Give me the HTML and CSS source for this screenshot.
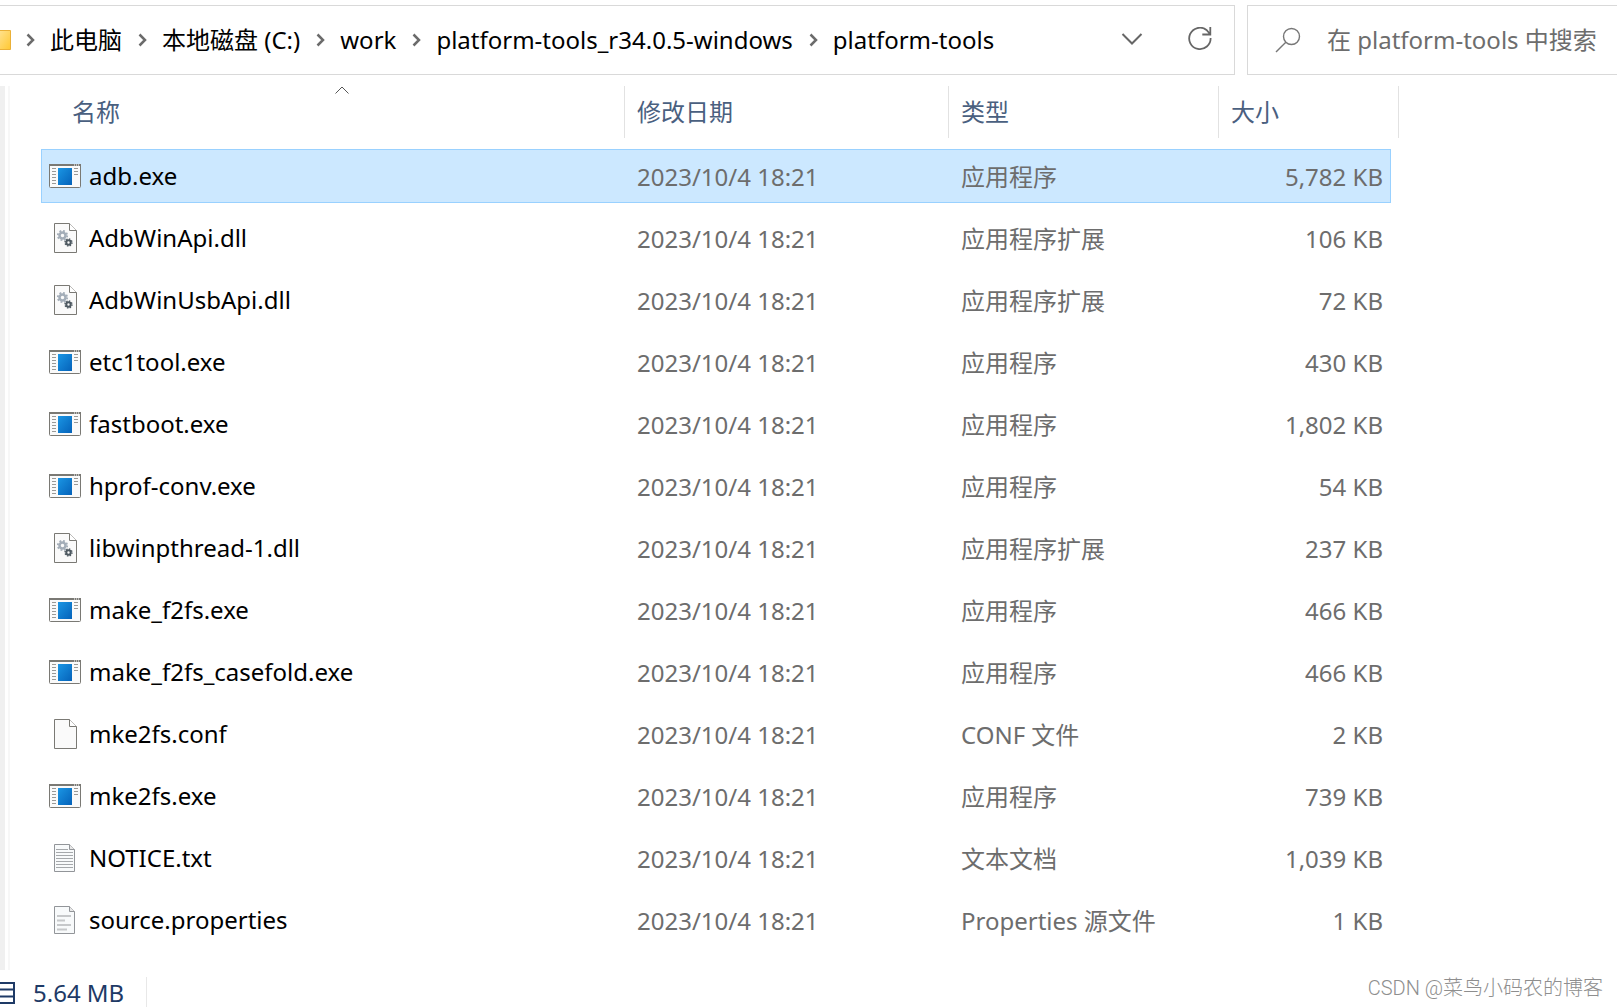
FILE: index.html
```html
<!DOCTYPE html>
<html lang="zh-CN">
<head>
<meta charset="utf-8">
<title>platform-tools</title>
<link rel="stylesheet" href="styles.css">
</head>
<body>
<svg class="defs" aria-hidden="true">
  <defs>
    <linearGradient id="blue" x1="0" y1="0" x2="1" y2="1"><stop offset="0" stop-color="#1b96e4"/><stop offset="1" stop-color="#0562b9"/></linearGradient>
    <linearGradient id="folder" x1="0" y1="0" x2="1" y2="1"><stop offset="0" stop-color="#ffe394"/><stop offset="1" stop-color="#ffc832"/></linearGradient>
    <symbol id="exe" viewBox="0 0 32 32">
      <rect x=".5" y="4.5" width="31" height="23" rx="1" fill="#fafafa" stroke="#7a7974"/>
      <path d="M0 5h32" stroke="#7a7974" stroke-width="2"/>
      <path d="M25 5h1M27 5h1M29 5h1" stroke="#fff"/>
      <path d="M3 8.5h4M3 11.5h4M3 14.5h4M3 17.5h4M3 20.5h4M3 23.5h4M25 8.5h4M25 11.5h4M25 14.5h4" stroke="#9a9a98"/>
      <rect x="9" y="8" width="14" height="17" fill="url(#blue)"/>
    </symbol>
    <symbol id="page" viewBox="0 0 32 32">
      <path d="M5.500 1.500h15l7 7v22h-22z" fill="#fafafa" stroke="#7a7974"/>
      <path d="M20.500 1.500v7h7" fill="#fff" stroke="#7a7974"/>
    </symbol>
    <symbol id="dll" viewBox="0 0 32 32">
      <use href="#page"/>
      <g fill="none" stroke="#a3adb8"><circle cx="13.500" cy="13.500" r="3" stroke-width="2.500"/><circle cx="13.500" cy="13.500" r="4.700" stroke-width="1.800" stroke-dasharray="1.850 1.840"/></g>
      <g fill="none" stroke="#4f5a62"><circle cx="19.500" cy="20.500" r="2.200" stroke-width="2"/><circle cx="19.500" cy="20.500" r="3.500" stroke-width="1.400" stroke-dasharray="1.380 1.370"/></g>
    </symbol>
    <symbol id="txt" viewBox="0 0 32 32">
      <path d="M5.500 2.500h15l5 5v22h-20z" fill="#f8fafb" stroke="#929599"/>
      <path d="M20.500 2.500v5h5" fill="#e8e8e8" stroke="#929599"/>
      <path d="M7 7.500h12M7 10.500h17M7 13.500h17M7 16.500h17M7 19.500h17M7 22.500h17M7 25.500h17" stroke="#a5a8ab"/>
    </symbol>
    <symbol id="src" viewBox="0 0 32 32">
      <path d="M5.500 2.500h15l5 5v22h-20z" fill="#f8fafb" stroke="#929599"/>
      <path d="M20.500 2.500v5h5" fill="#e8e8e8" stroke="#929599"/>
      <path d="M8 12h14M8 16.500h8M8 21h14M8 25.500h10" stroke="#c6c8ca" stroke-width="2"/>
    </symbol>
    <symbol id="sep" viewBox="0 0 9 14"><path d="M1.500 1.500L7 7l-5.500 5.500" fill="none" stroke="#6b6b6b" stroke-width="2.500"/></symbol>
  </defs>
</svg>

<header class="toolbar">
  <div class="address">
    <nav class="crumbs" aria-label="路径">
      <svg class="folder" viewBox="0 0 11 20"><path d="M-2 .5h12.500v19H-2z" fill="url(#folder)" stroke="#eab037"/></svg>
      <svg class="sep"><use href="#sep"/></svg><a href="#">此电脑</a>
      <svg class="sep"><use href="#sep"/></svg><a href="#">本地磁盘 (C:)</a>
      <svg class="sep"><use href="#sep"/></svg><a href="#">work</a>
      <svg class="sep"><use href="#sep"/></svg><a href="#">platform-tools_r34.0.5-windows</a>
      <svg class="sep"><use href="#sep"/></svg><a href="#">platform-tools</a>
    </nav>
    <button class="tool" type="button" aria-label="以前的位置"><svg width="24" height="24" viewBox="0 0 24 24"><path d="M2.500 7l9.500 9.500L21.500 7" fill="none" stroke="#666" stroke-width="2"/></svg></button>
    <button class="tool" type="button" aria-label="刷新"><svg width="24" height="24" viewBox="0 0 24 24"><path d="M22.600 11A10.700 10.700 0 1 1 18.500 3L22 7M22.300 0v7.500h-8" fill="none" stroke="#666" stroke-width="1.800"/></svg></button>
  </div>
  <label class="search">
    <svg width="26" height="26" viewBox="0 0 26 26"><circle cx="16.500" cy="9.500" r="8" fill="none" stroke="#777" stroke-width="1.400"/><path d="M10.800 15.200L1 25" stroke="#777" stroke-width="1.400"/></svg>
    <input type="text" aria-label="搜索" placeholder="在 platform-tools 中搜索">
  </label>
</header>

<main class="content">
  <div class="pane-edge"></div>
  <div class="list">
    <table class="files">
      <colgroup><col><col class="col-date"><col class="col-type"><col class="col-size"></colgroup>
      <thead>
        <tr>
          <th class="name"><button type="button">名称</button><svg class="sort" viewBox="0 0 14 8"><path d="M.5 7.500L7 1l6.500 6.500" fill="none" stroke="#555"/></svg></th>
          <th><button type="button">修改日期</button></th>
          <th><button type="button">类型</button></th>
          <th><button type="button">大小</button></th>
        </tr>
      </thead>
      <tbody>
        <tr class="selected"><td><div class="file"><svg><use href="#exe"/></svg>adb.exe</div></td><td>2023/10/4 18:21</td><td>应用程序</td><td>5,782 KB</td></tr>
        <tr><td><div class="file"><svg><use href="#dll"/></svg>AdbWinApi.dll</div></td><td>2023/10/4 18:21</td><td>应用程序扩展</td><td>106 KB</td></tr>
        <tr><td><div class="file"><svg><use href="#dll"/></svg>AdbWinUsbApi.dll</div></td><td>2023/10/4 18:21</td><td>应用程序扩展</td><td>72 KB</td></tr>
        <tr><td><div class="file"><svg><use href="#exe"/></svg>etc1tool.exe</div></td><td>2023/10/4 18:21</td><td>应用程序</td><td>430 KB</td></tr>
        <tr><td><div class="file"><svg><use href="#exe"/></svg>fastboot.exe</div></td><td>2023/10/4 18:21</td><td>应用程序</td><td>1,802 KB</td></tr>
        <tr><td><div class="file"><svg><use href="#exe"/></svg>hprof-conv.exe</div></td><td>2023/10/4 18:21</td><td>应用程序</td><td>54 KB</td></tr>
        <tr><td><div class="file"><svg><use href="#dll"/></svg>libwinpthread-1.dll</div></td><td>2023/10/4 18:21</td><td>应用程序扩展</td><td>237 KB</td></tr>
        <tr><td><div class="file"><svg><use href="#exe"/></svg>make_f2fs.exe</div></td><td>2023/10/4 18:21</td><td>应用程序</td><td>466 KB</td></tr>
        <tr><td><div class="file"><svg><use href="#exe"/></svg>make_f2fs_casefold.exe</div></td><td>2023/10/4 18:21</td><td>应用程序</td><td>466 KB</td></tr>
        <tr><td><div class="file"><svg><use href="#page"/></svg>mke2fs.conf</div></td><td>2023/10/4 18:21</td><td>CONF 文件</td><td>2 KB</td></tr>
        <tr><td><div class="file"><svg><use href="#exe"/></svg>mke2fs.exe</div></td><td>2023/10/4 18:21</td><td>应用程序</td><td>739 KB</td></tr>
        <tr><td><div class="file"><svg><use href="#txt"/></svg>NOTICE.txt</div></td><td>2023/10/4 18:21</td><td>文本文档</td><td>1,039 KB</td></tr>
        <tr><td><div class="file"><svg><use href="#src"/></svg>source.properties</div></td><td>2023/10/4 18:21</td><td>Properties 源文件</td><td>1 KB</td></tr>
      </tbody>
    </table>
  </div>
</main>

<footer class="status">
  <svg class="status-icon" viewBox="0 0 15 22"><path d="M0 1h14v20H0M0 7.500h14M0 14.500h14" fill="none" stroke="#1e3a66" stroke-width="2"/></svg>
  <span class="total">5.64 MB</span>
</footer>
<div class="watermark">CSDN @菜鸟小码农的博客</div>
</body>
</html>
```
FILE: styles.css
```css
* { box-sizing: border-box; }

body {
  margin: 0;
  min-height: 100vh;
  display: flex;
  flex-direction: column;
  position: relative;
  overflow: hidden;
  background: #fff;
  color: #000;
  font: 24px/32px "Noto Sans", "Noto Sans CJK SC", sans-serif;
}

button, input {
  font: inherit;
  color: inherit;
  background: none;
  border: 0;
  padding: 0;
  margin: 0;
}

svg { display: block; flex: none; }
.defs { position: absolute; width: 0; height: 0; }

.toolbar {
  display: flex;
  gap: 12px;
  padding-top: 5px;
}
.address, .search {
  display: flex;
  align-items: center;
  height: 70px;
  border: 1px solid #d9d9d9;
}
.address {
  flex: 1;
  min-width: 0;
  border-left: 0;
  padding-right: 22px;
  gap: 44px;
}
.crumbs {
  flex: 1;
  display: flex;
  align-items: center;
  gap: 15px;
  white-space: nowrap;
}
.crumbs a { color: inherit; text-decoration: none; padding-right: 1px; }
.folder { width: 11px; height: 20px; }
.sep { width: 9px; height: 14px; }
.tool { height: 32px; padding-bottom: 2px; }
.search {
  width: 370px;
  border-right: 0;
  padding-left: 27px;
  gap: 26px;
  color: #6d6d6d;
}
.search input { flex: 1; min-width: 0; outline: 0; }
.search input::placeholder { color: #6d6d6d; opacity: 1; }

.content {
  flex: 1;
  display: flex;
}
.pane-edge {
  width: 10px;
  margin-top: 11px;
  border-left: 5px solid #f0f0f0;
  border-right: 2px solid #f7f7f7;
}
.list {
  flex: 1;
  padding: 3px 226px 0 31px;
}
.files {
  width: 100%;
  table-layout: fixed;
  border-collapse: separate;
  border-spacing: 0 8px;
}
.col-date { width: 324px; }
.col-type { width: 270px; }
.col-size { width: 173px; }

th {
  position: relative;
  height: 55px;
  padding: 0 0 4px 13px;
  text-align: left;
  font-weight: 400;
  color: #4a607f;
}
th.name { padding-left: 31px; }
th::after {
  content: "";
  position: absolute;
  top: 0;
  right: -1px;
  width: 1px;
  height: 52px;
  background: #e2e2e2;
}
th:last-child::after { right: -8px; }
.sort {
  position: absolute;
  top: 0;
  left: 294px;
  width: 14px;
  height: 8px;
}

td {
  height: 54px;
  padding: 2px 0 0 13px;
  border: solid transparent;
  border-width: 1px 0;
  color: #6d6d6d;
  white-space: nowrap;
}
td:first-child {
  padding: 0 0 0 7px;
  border-left-width: 1px;
  color: #000;
}
td:last-child {
  padding: 2px 7px 0 0;
  border-right-width: 1px;
  text-align: right;
}
.selected td {
  background: #cce8ff;
  border-color: #99d1ff;
}
.file {
  display: flex;
  align-items: center;
  gap: 8px;
}
.file svg { width: 32px; height: 32px; }

.status {
  display: flex;
  align-items: center;
  height: 37px;
  gap: 18px;
  padding-top: 8px;
  color: #1e3a66;
}
.status-icon { width: 15px; height: 22px; }
.total {
  padding-right: 22px;
  border-right: 1px solid #e8e8e8;
}

.watermark {
  position: absolute;
  right: 14px;
  bottom: 3px;
  font-size: 20px;
  color: #8e8e8e;
  font-family: Roboto, "Noto Sans CJK SC", sans-serif;
  font-weight: 300;
}
```
